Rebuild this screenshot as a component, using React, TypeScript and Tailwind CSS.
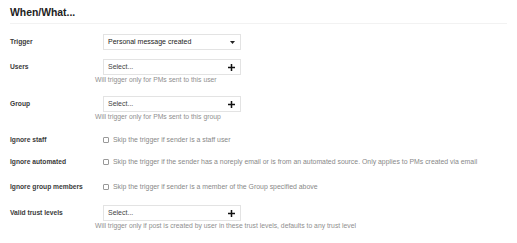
function Caret() {
  return (
    <svg width="5" height="3" viewBox="0 0 5 3" className="fill-[#222]">
      <path d="M0 0h5L2.5 3z" />
    </svg>
  );
}

function Plus() {
  return (
    <svg width="7" height="7" viewBox="0 0 7 7" className="fill-[#111]">
      <rect x="2.75" y="0" width="1.5" height="7" />
      <rect x="0" y="2.75" width="7" height="1.5" />
    </svg>
  );
}

function SelectBox({ text, icon, dark }: { text: string; icon: "caret" | "plus"; dark?: boolean }) {
  return (
    <div className="w-[138px] h-[16px] border border-[#e3e3e3] flex items-center justify-between pl-[4px] pr-[5px]">
      <span className={dark ? "text-[#222] text-[7px]" : "text-[#444] text-[7px]"}>{text}</span>
      {icon === "caret" ? <Caret /> : <Plus />}
    </div>
  );
}

function Label({ children }: { children: string }) {
  return <div className="w-[93px] shrink-0 text-[6.7px] font-semibold text-[#3a3a3a]">{children}</div>;
}

function Helper({ children }: { children: string }) {
  return <div className="ml-[85px] mt-[1px] h-[8px] leading-[8px] text-[6.8px] text-[#8f8f8f]">{children}</div>;
}

function CheckRow({ label, text, mt }: { label: string; text: string; mt: string }) {
  return (
    <div className={`flex items-center h-[10px] ${mt}`}>
      <Label>{label}</Label>
      <div className="flex items-center gap-[4px]">
        <span className="w-[6px] h-[6px] border border-[#999] rounded-[1px] bg-white" />
        <span className="text-[6.9px] text-[#888]">{text}</span>
      </div>
    </div>
  );
}

export default function App() {
  return (
    <div className="w-[517px] h-[243px] bg-white px-[10px] overflow-hidden font-['Liberation_Sans',Arial,sans-serif]">
      <div className="pt-[6px] h-[24px] border-b border-[#f2f2f2] text-[10.4px] font-bold text-[#222] leading-[13px]">
        When/What...
      </div>

      <div className="flex items-center h-[16px] mt-[10px]">
        <Label>Trigger</Label>
        <SelectBox text="Personal message created" icon="caret" dark />
      </div>

      <div className="flex items-center h-[16px] mt-[9px]">
        <Label>Users</Label>
        <SelectBox text="Select..." icon="plus" />
      </div>
      <Helper>Will trigger only for PMs sent to this user</Helper>

      <div className="flex items-center h-[16px] mt-[12px]">
        <Label>Group</Label>
        <SelectBox text="Select..." icon="plus" />
      </div>
      <Helper>Will trigger only for PMs sent to this group</Helper>

      <CheckRow mt="mt-[14px]" label="Ignore staff" text="Skip the trigger if sender is a staff user" />
      <CheckRow
        mt="mt-[12px]"
        label="Ignore automated"
        text="Skip the trigger if the sender has a noreply email or is from an automated source. Only applies to PMs created via email"
      />
      <CheckRow
        mt="mt-[15px]"
        label="Ignore group members"
        text="Skip the trigger if sender is a member of the Group specified above"
      />

      <div className="flex items-center h-[16px] mt-[13px]">
        <Label>Valid trust levels</Label>
        <SelectBox text="Select..." icon="plus" />
      </div>
      <Helper>Will trigger only if post is created by user in these trust levels, defaults to any trust level</Helper>
    </div>
  );
}
